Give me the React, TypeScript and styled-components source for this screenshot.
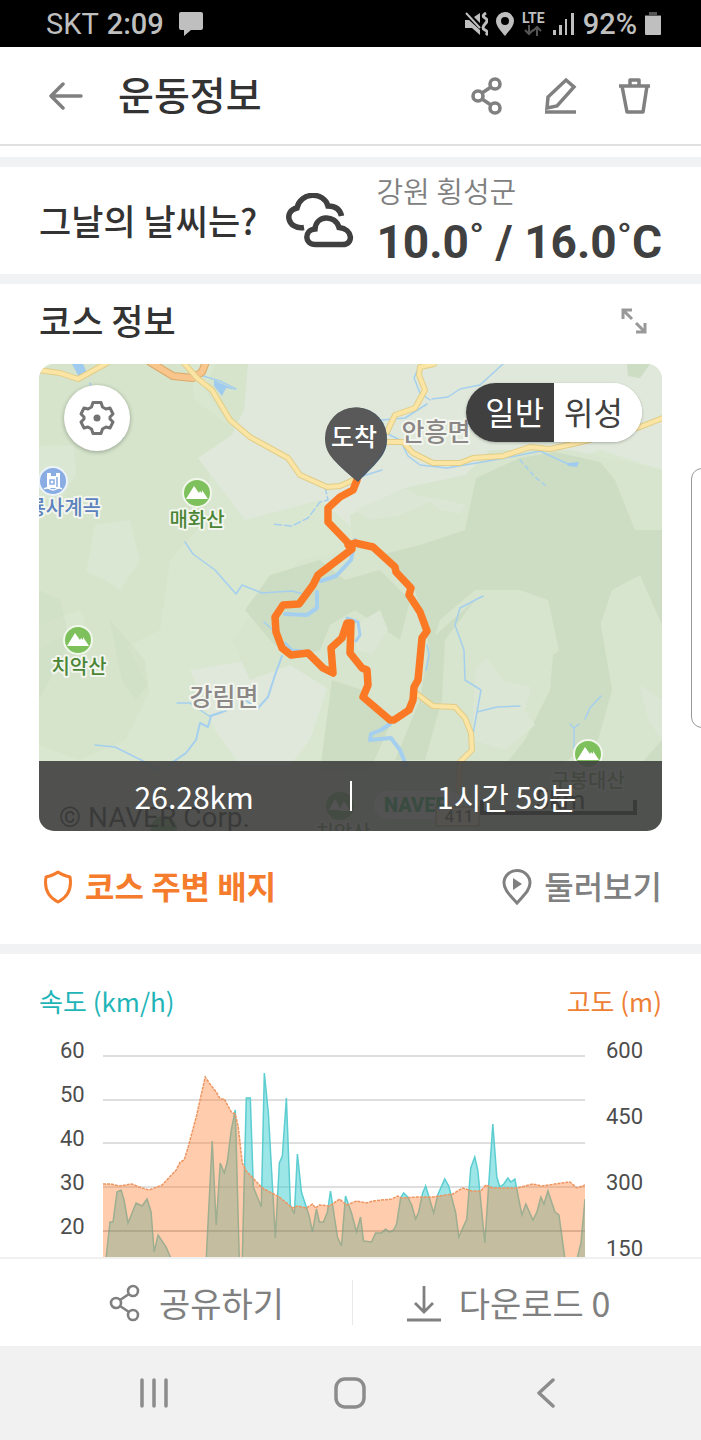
import React from "react";
import styled, { createGlobalStyle } from "styled-components";

const kr = `"Noto Sans CJK KR", sans-serif`;
const latin = `Roboto, "Noto Sans CJK KR", sans-serif`;

const GlobalStyle = createGlobalStyle`
  * { box-sizing: border-box; }
  body { margin: 0; background: #fff; font-family: ${kr}; color: #333; }
  button { border: 0; padding: 0; background: none; font: inherit; color: inherit; cursor: pointer; }
  a { color: inherit; text-decoration: none; }
  h1, h2, p { margin: 0; }
  svg { display: block; flex: none; }
`;

const Screen = styled.div`
  position: relative;
  display: flex;
  flex-direction: column;
  height: 100vh;
  overflow: hidden;
`;

const StatusBar = styled.div`
  display: flex;
  align-items: center;
  justify-content: space-between;
  flex: none;
  height: 47px;
  padding: 0 40px 0 46px;
  background: #000;
  color: #bfbfbf;
  font-family: ${latin};
  font-size: 29px;
  line-height: 32px;
`;

const StatusGroup = styled.div<{ $gap: number }>`
  display: flex;
  align-items: center;
  gap: ${(p) => p.$gap}px;
`;

const StatusText = styled.span<{ $strong?: boolean }>`
  font-weight: ${(p) => (p.$strong ? 500 : 400)};
`;

const Network = styled.span`
  display: flex;
  flex-direction: column;
  align-items: center;
  font-size: 14px;
  font-weight: 700;
  line-height: 12px;
  gap: 1px;
`;

const Header = styled.header`
  display: flex;
  align-items: center;
  flex: none;
  height: 99px;
  padding: 0 48px;
  border-bottom: 2px solid #e0e0e0;
  color: #808080;
`;

const PageTitle = styled.h1`
  margin-left: 34px;
  padding-bottom: 6px;
  color: #333;
  font-size: 39px;
  font-weight: 500;
  line-height: 48px;
`;

const HeaderActions = styled.div`
  display: flex;
  gap: 38px;
  margin-left: auto;
`;

const IconButton = styled.button`
  display: flex;
  align-items: center;
  justify-content: center;
  width: 36px;
  height: 44px;
`;

const Content = styled.main`
  flex: 1;
  min-height: 0;
  padding-top: 11px;
  overflow: hidden;
`;

const Band = styled.div`
  height: 10px;
  background: #f1f2f4;
`;

const Weather = styled.section`
  display: flex;
  align-items: center;
  height: 107px;
  padding: 0 39px;
`;

const SectionTitle = styled.h2`
  padding-bottom: 2px;
  font-size: 35px;
  font-weight: 500;
  line-height: 48px;
`;

const WeatherInfo = styled.div`
  display: flex;
  align-items: center;
  gap: 22px;
  margin-left: auto;
  color: #404040;
`;

const Place = styled.p`
  color: #808080;
  font-size: 29px;
  font-weight: 350;
  line-height: 40px;
`;

const Temperature = styled.p`
  padding-top: 2px;
  font-family: ${latin};
  font-size: 46px;
  font-weight: 700;
  line-height: 60px;
  white-space: nowrap;
`;

const Course = styled.section`
  padding: 0 39px;
`;

const CourseHead = styled.div`
  display: flex;
  align-items: center;
  justify-content: space-between;
  height: 80px;
  padding: 0 8px 6px 0;
`;

const ExpandButton = styled.button`
  width: 40px;
  height: 40px;
  display: flex;
  align-items: center;
  justify-content: center;
  color: #999;
`;

const MapCard = styled.div`
  position: relative;
  border-radius: 15px;
  overflow: hidden;
`;

const MapCanvas = styled.svg`
  width: 100%;
  height: auto;
  font-family: ${kr};
`;

const SettingsButton = styled.button`
  position: absolute;
  top: 21px;
  left: 25px;
  display: flex;
  align-items: center;
  justify-content: center;
  width: 66px;
  height: 66px;
  border-radius: 50%;
  background: #fff;
  box-shadow: 0 1px 4px rgba(0, 0, 0, 0.3);
  color: #737373;
`;

const MapTypes = styled.div`
  position: absolute;
  top: 19px;
  right: 20px;
  display: flex;
  height: 59px;
  border-radius: 30px;
  overflow: hidden;
  background: #fff;
  box-shadow: 0 1px 3px rgba(0, 0, 0, 0.25);
`;

const MapType = styled.button<{ $active?: boolean }>`
  padding: ${(p) => (p.$active ? "0 10px 4px 19px" : "0 19px 4px 10px")};
  background: ${(p) => (p.$active ? "#404040" : "#fff")};
  color: ${(p) => (p.$active ? "#fff" : "#404040")};
  font-size: 32px;
  line-height: 48px;
`;

const MapSummary = styled.div`
  position: absolute;
  right: 0;
  bottom: 0;
  left: 0;
  display: flex;
  align-items: center;
  height: 70px;
  background: rgba(64, 64, 64, 0.9);
  color: #fff;
`;

const SummaryValue = styled.span`
  flex: 1;
  font-size: 30px;
  line-height: 44px;
  text-align: center;
`;

const SummaryDivider = styled.span`
  width: 2px;
  height: 30px;
  background: #fff;
`;

const CourseLinks = styled.div`
  display: flex;
  align-items: center;
  justify-content: space-between;
  height: 113px;
`;

const CourseLink = styled.a<{ $accent?: boolean }>`
  display: flex;
  align-items: center;
  gap: 12px;
  padding-left: 4px;
  color: ${(p) => (p.$accent ? "#f47c2c" : "#808080")};
  font-size: 32px;
  font-weight: ${(p) => (p.$accent ? 700 : 500)};
  line-height: 44px;
`;

const LinkText = styled.span`
  padding-bottom: 6px;
`;

const ChartTitles = styled.div`
  display: flex;
  justify-content: space-between;
  padding: 32px 39px 2px;
`;

const ChartTitle = styled.p<{ $color: string }>`
  color: ${(p) => p.$color};
  font-size: 26px;
  line-height: 30px;
`;

const Chart = styled.div`
  display: grid;
  grid-template-columns: 64px 1fr 77px;
  padding: 0 39px;
  font-family: ${latin};
  font-size: 22px;
  color: #4d4d4d;
`;

const Axis = styled.div<{ $step: number; $top: number }>`
  display: flex;
  flex-direction: column;
  padding: ${(p) => p.$top}px 0 0 21px;
  line-height: ${(p) => p.$step}px;
`;

const Plot = styled.svg`
  width: 100%;
  height: 202px;
  margin-top: 37px;
`;

const ActionBar = styled.div`
  display: flex;
  align-items: center;
  flex: none;
  height: 89px;
  padding: 0 37px 0 41px;
  border-top: 2px solid #f0f0f0;
  background: #fff;
  color: #808080;
`;

const Action = styled.button`
  display: flex;
  flex: 1;
  align-items: center;
  justify-content: center;
  gap: 18px;
  font-size: 34px;
  font-weight: 400;
  line-height: 48px;
`;

const ActionDivider = styled.span`
  width: 1px;
  height: 45px;
  background: #e8e8e8;
`;

const SystemNav = styled.nav`
  display: flex;
  align-items: center;
  justify-content: center;
  gap: 156px;
  flex: none;
  height: 94px;
  padding-right: 2px;
  background: #f1f1f1;
  color: #8c8c8c;
`;

const NavButton = styled.button`
  display: flex;
  align-items: center;
  justify-content: center;
  width: 40px;
  height: 48px;
`;

const EdgeHandle = styled.div`
  position: absolute;
  top: 468px;
  right: -12px;
  width: 22px;
  height: 260px;
  border: 1px solid #999;
  border-radius: 11px;
  background: #fff;
`;

const ShareIcon = ({ width = 3.6 }: { width?: number }) => (
  <svg width="32" height="38" viewBox="0 0 32 38" fill="none" stroke="currentColor" strokeWidth={width}>
    <circle cx="7" cy="19" r="5" />
    <circle cx="24" cy="7" r="5" />
    <circle cx="24" cy="31" r="5" />
    <path d="M11 16 L20 10 M11 22 L20 28" />
  </svg>
);

const elevation: number[][] = [
  [0, 129], [8, 129], [16, 131], [29, 129], [36, 132], [46, 135], [54, 132], [59, 130], [73, 115], [77, 107], [81, 105],
  [85, 92], [93, 62], [102, 22], [106, 28], [113, 37], [117, 44], [121, 44], [128, 57], [132, 59], [135, 72], [139, 108],
  [143, 116], [159, 133], [176, 142], [189, 153], [194, 151], [203, 153], [209, 149], [212, 153], [216, 150], [226, 151],
  [236, 144], [243, 150], [253, 146], [263, 148], [269, 146], [288, 144], [294, 141], [298, 143], [313, 142], [329, 142],
  [349, 139], [359, 133], [368, 136], [377, 136], [382, 130], [389, 133], [413, 133], [429, 129], [438, 131], [458, 128],
  [466, 127], [473, 133], [481, 130],
];

const speed: number[][] = [
  [3, 204], [7, 167], [10, 167], [14, 137], [18, 135], [21, 145], [25, 168], [33, 148], [39, 151], [44, 144], [48, 157],
  [51, 197], [55, 180], [63, 192], [68, 204], [103, 204], [109, 86], [113, 170], [117, 108], [121, 118], [124, 107],
  [128, 75], [132, 55], [136, 204], [139, 204], [143, 43], [147, 43], [150, 132], [158, 152], [161, 18], [165, 58],
  [172, 183], [176, 108], [179, 101], [183, 43], [187, 150], [191, 159], [194, 99], [198, 137], [206, 162], [209, 177],
  [213, 154], [216, 167], [220, 167], [224, 157], [227, 136], [234, 182], [238, 191], [242, 141], [248, 158], [253, 177],
  [257, 162], [260, 186], [268, 187], [272, 178], [278, 178], [282, 174], [286, 177], [290, 175], [293, 169], [297, 143],
  [300, 138], [304, 142], [308, 150], [312, 164], [315, 157], [319, 138], [322, 131], [330, 158], [334, 140], [341, 124],
  [345, 131], [352, 158], [355, 182], [363, 164], [367, 113], [371, 102], [374, 115], [381, 188], [389, 69], [393, 122],
  [396, 132], [400, 129], [404, 123], [407, 127], [411, 124], [418, 160], [422, 149], [429, 165], [433, 157], [437, 142],
  [440, 149], [444, 136], [451, 157], [455, 160], [461, 204], [473, 204], [477, 188], [481, 144],
];

const toLine = (points: number[][]) => points.map((p) => p.join(",")).join(" ");

const route =
  "M357 480 L353 490 L340 497 L328 508 L328 522 L351 546 L352 549 L318 575 L313 585 L299 604 L283 605 L275 617 L276 632 L282 648 L291 655 L308 653 L323 668 L333 673 L331 648 L342 638 L347 623 L351 623 L350 653 L362 668 L367 670 L368 685 L363 697 L390 720 L394 720 L409 710 L413 700 L414 687 L418 680 L422 638 L427 631 L420 612 L409 595 L411 588 L396 572 L395 567 L373 547 L355 543 L348 545";

const roads = [
  "M38 370 L60 373 L78 379 L107 363",
  "M183 362 L197 378 L212 390 L230 420 L250 437 L288 458 L300 475 L327 487 L340 486 L358 478",
  "M387 432 L395 415 L415 408 L425 390 L419 375 L420 367 L434 364",
  "M380 442 L403 442 L413 453 L433 463 L460 463 L473 458 L503 456 L530 447 L550 449 L577 443 L640 427 L663 418",
  "M417 694 L433 706 L455 707 L465 718 L471 733 L472 750 L460 762 L458 800",
];

const Peak = ({ x, y }: { x: number; y: number }) => (
  <g transform={`translate(${x} ${y})`}>
    <circle r="14" fill="#7dc05c" stroke="#f2f7ec" strokeWidth="2" />
    <path d="M-11 6 L-3 -7 L2 0 L3 -2 L5 0 L5 -3 L11 6 Z" fill="#fff" />
  </g>
);

interface LabelProps {
  x: number;
  y: number;
  size: number;
  color: string;
  anchor?: "middle" | "end";
  children: string;
}

const MapLabel = ({ x, y, size, color, anchor = "middle", children }: LabelProps) => (
  <text
    x={x} y={y} fontSize={size} fontWeight="500" fill={color} textAnchor={anchor}
    stroke="#f3f6ee" strokeWidth="4" strokeLinejoin="round" paintOrder="stroke"
  >
    {children}
  </text>
);

const CourseMap = () => (
  <MapCanvas viewBox="39 364 623 467" role="img" aria-label="코스 지도">
    <rect x="39" y="364" width="623" height="467" fill="#dae7d0" />
    <g fill="#d5e4cb">
      <path d="M39 364 H190 L195 400 L235 430 L212 455 L205 520 L170 560 L160 630 L100 660 L80 610 L39 625 Z" />
      <path d="M39 650 L90 620 L130 650 L150 690 L125 740 L80 760 L39 745 Z" />
      <path d="M215 364 H250 L245 410 L232 430 L205 390 Z" />
    </g>
    <path d="M39 446 L74 445 L76 474 L60 500 L39 500 Z M95 525 L130 520 L140 560 L120 590 L105 580 L86 572 Z" fill="#dae7d2" />
    <g fill="#dfe8da">
      <path d="M248 364 H662 V470 L600 450 L540 470 L470 490 L400 500 L355 530 L320 500 L245 520 L198 458 L232 435 L244 410 Z" />
      <path d="M190 670 L280 655 L330 680 L310 740 L290 765 H240 L215 730 Z" />
    </g>
    <g fill="#d7e4ce">
      <path d="M350 515 L405 488 L465 475 L490 450 L570 450 L662 470 V831 H350 L340 700 L360 610 Z" />
      <path d="M232 640 L270 590 L300 560 L350 550 L400 600 L420 690 L360 760 H325 L330 690 L290 665 L250 680 Z" />
    </g>
    <g fill="#cdddc3">
      <path d="M420 545 L465 530 L476 478 L520 458 L555 452 L600 462 L615 480 L635 530 L662 530 V625 L640 575 L612 590 L600 625 L560 655 L548 600 L520 590 L475 590 L440 620 L430 650 L415 590 L380 555 Z" />
      <path d="M245 610 L270 575 L320 560 L345 580 L380 570 L410 600 L400 640 L355 610 L330 625 L320 650 L290 660 L270 640 Z" />
      <path d="M332 680 L362 690 L390 725 L370 770 H320 Z M600 620 L612 690 L598 740 L560 765 H505 L525 740 L550 690 L553 655 Z" />
      <path d="M430 640 L475 600 L445 640 L442 700 L425 760 H395 L420 700 Z" />
      <path d="M39 590 L60 600 L70 640 L39 700 Z M110 620 L145 660 L148 685 L135 700 L122 680 Z" opacity="0.5" />
      <path d="M627 364 H650 L640 378 L628 376 Z M662 740 L640 765 H662 Z" />
    </g>
    <g fill="#dbe6d4">
      <path d="M355 510 L405 489 L420 496 L445 500 L466 505 L460 514 L440 510 L430 502 L400 515 L370 520 Z" />
      <path d="M475 670 L487 658 L505 682 L531 687 L525 710 L535 725 L505 750 L472 740 Z" />
      <path d="M355 625 L380 610 L388 630 L372 655 L356 650 Z M640 685 L662 700 V740 L648 720 Z" />
    </g>

    <g fill="none" stroke="#a5cfee" strokeLinejoin="round" strokeLinecap="round">
      <g strokeWidth="1.5">
        <path d="M90 383 L95 400 L123 438 M203 376 L220 381 L236 389" />
        <path d="M185 542 L193 554 L215 570 L236 594 L242 585 L262 593 L292 591 L307 595" />
        <path d="M325 487 L328 500 L320 502 L308 518 L292 526 L272 524" strokeDasharray="7 3" />
        <path d="M503 364 L480 385 L460 389 L448 397 L432 399 M420 364 L414 378 L420 393 L430 400" />
        <path d="M382 470 L350 480 M370 421 L405 418 L427 404 M388 434 L400 440 L408 456 L420 465 L447 468 L500 459 L540 451 L570 465" />
        <path d="M520 460 L535 477 L545 485" strokeDasharray="4 4" />
        <path d="M483 596 L460 608 L455 625 L464 650 L465 680 L481 690 L477 712 L472 740 M477 712 L497 707 L520 706" />
        <path d="M570 724 L574 728 L579 724 M574 728 V748 M601 696 L590 708 L585 719" />
        <path d="M95 745 L115 747 L145 762 L160 770 M177 703 L190 703 L209 716 L226 711" />
        <path d="M264 622 L275 632 M427 645 L429 655 L426 670" />
      </g>
      <path d="M282 656 L275 675 L268 697 L258 708 L245 700 M222 712 L211 716 L208 727 L200 723 L196 740 L186 753 L170 764" strokeWidth="2" />
      <path d="M355 540 L351 560 L336 576 L321 581 M317 592 L317 608 L307 615 L285 614" strokeWidth="4" />
      <path d="M285 643 L292 650 L310 652 M347 618 L358 622 L360 635 L356 641" strokeWidth="3" />
      <path d="M390 724 L381 730 L371 734 L370 740 L391 738 L400 750 L406 765" strokeWidth="4" />
    </g>
    <g fill="#9fcbee">
      <path d="M72 364 L83 364 L88 375 L80 379 Z" />
      <path d="M214 380 L236 390 L226 388 L222 396 L214 386 Z M567 463 L579 462 L577 467 L568 466 Z" />
    </g>

    <g fill="none" strokeLinejoin="round" strokeLinecap="round">
      <path d="M150 362 L173 376 L193 378 L202 372 L206 362" stroke="#dca968" strokeWidth="8" />
      <path d="M150 362 L173 376 L193 378 L202 372 L206 362" stroke="#f8c58c" strokeWidth="6" />
      {roads.map((d) => <path key={d} d={d} stroke="#e2cd88" strokeWidth="6" />)}
      {roads.map((d) => <path key={d} d={d} stroke="#fbe5a5" strokeWidth="4" />)}
      <path d={route} stroke="#fb7924" strokeWidth="7.5" />
    </g>

    <Peak x={197} y={493} />
    <MapLabel x={197} y={527} size={20} color="#4b8636">매화산</MapLabel>
    <Peak x={78} y={640} />
    <MapLabel x={79} y={674} size={20} color="#4b8636">치악산</MapLabel>
    <Peak x={588} y={754} />
    <MapLabel x={588} y={788} size={20} color="#4b8636">구봉대산</MapLabel>
    <circle cx="53" cy="481" r="14" fill="#89ade2" stroke="#edf3fa" strokeWidth="2" />
    <path d="M47 473 H51 V476 H56 V473 H60 V488 H47 Z" fill="#fff" />
    <path d="M50 480 H54 V484 H50 Z M57 477 V487" fill="none" stroke="#89ade2" strokeWidth="1.5" />
    <path d="M44 489 Q47 487 50 489 T56 489 T62 489" fill="none" stroke="#fff" strokeWidth="1.5" />
    <MapLabel x={101} y={515} size={20} color="#5c82bd" anchor="end">룡사계곡</MapLabel>
    <MapLabel x={436} y={441} size={25} color="#8c8787">안흥면</MapLabel>
    <MapLabel x={224} y={706} size={25} color="#8c8787">강림면</MapLabel>

    <circle cx="340" cy="806" r="14" fill="#6aa84f" />
    <path d="M335 799 L341 810 H329 Z M344 801 L350 811 H339 Z" fill="#fff" />
    <MapLabel x={343} y={840} size={20} color="#4b8636">치악산</MapLabel>
    <circle cx="164" cy="829" r="13" fill="#6aa84f" />
    <rect x="374" y="791" width="88" height="28" rx="14" fill="#fff" />
    <text x="384" y="812" fontSize="20" fontWeight="900" fontFamily={latin} fill="#00b050">NAVER</text>
    <rect x="436" y="807" width="43" height="19" fill="#fff4c9" stroke="#a08040" />
    <text x="459" y="822" fontSize="17" fontWeight="500" textAnchor="middle" fontFamily={latin} fill="#333">411</text>
    <path d="M482 800 V813 H635 V800" fill="none" stroke="#000" strokeWidth="4" />
    <text x="560" y="809" fontSize="26" textAnchor="middle" fontFamily={latin} fill="#000">5km</text>
    <text x="59" y="827" fontSize="28" fontFamily={latin} fill="#000">© NAVER Corp.</text>

    <path d="M326 436 A30.500 30.500 0 0 1 387 440 C387 453 380 460 358 482 C332 460 325 452 326 436 Z" fill="#4b5a68" />
    <path d="M325 438 A30.500 30.500 0 0 1 386 438 C386 452 378 460 357 481 C332 460 325 453 325 438 Z" fill="#595959" />
    <text x="354" y="446" fontSize="25" fontWeight="500" textAnchor="middle" fill="#fff">도착</text>
  </MapCanvas>
);

export default function App() {
  return (
    <>
      <GlobalStyle />
      <Screen>
        <StatusBar>
          <StatusGroup $gap={8}>
            <StatusText>SKT</StatusText>
            <StatusText $strong>2:09</StatusText>
            <svg width="32" height="26" viewBox="0 0 32 26" fill="currentColor">
              <path d="M9 1 H29 Q31 1 31 3 V17 Q31 19 29 19 H19 L12 25 V19 H9 Q7 19 7 17 V3 Q7 1 9 1 Z" />
            </svg>
          </StatusGroup>
          <StatusGroup $gap={8}>
            <svg width="23" height="24" viewBox="0 0 23 24" fill="currentColor">
              <path d="M0 8 H4 L15 18 V23 L7 16 H0 Z M9 5 L15 1 V11 Z" />
              <path d="M1 1 L15 16" fill="none" stroke="currentColor" strokeWidth="2" />
              <path d="M21 1 Q16 4 20 6 T20 12 T20 18 T21 23" fill="none" stroke="currentColor" strokeWidth="3" />
            </svg>
            <svg width="18" height="24" viewBox="0 0 18 24" fill="currentColor" fillRule="evenodd">
              <path d="M9 0 A9 9 0 0 1 18 9 C18 14 13 19 9 24 C5 19 0 14 0 9 A9 9 0 0 1 9 0 Z M9 5 A4 4 0 1 0 9 13 A4 4 0 1 0 9 5 Z" />
            </svg>
            <Network>
              LTE
              <svg width="18" height="11" viewBox="0 0 18 11" fill="none" stroke="#555" strokeWidth="2">
                <path d="M5 0 V9 M1 5 L5 9 L9 5 M13 11 V2 M9 6 L13 2 L17 6" />
              </svg>
            </Network>
            <svg width="22" height="24" viewBox="0 0 22 24" fill="currentColor">
              <path d="M0 18 H3 V23 H0 Z M6 13 H9 V23 H6 Z M12 7 H14 V23 H12 Z M18 1 H21 V23 H18 Z" />
            </svg>
            <StatusText $strong>92%</StatusText>
            <svg width="16" height="24" viewBox="0 0 16 24" fill="currentColor">
              <path d="M4 0 H12 V3 H16 V5 H0 V3 H4 Z" fill="#555" />
              <path d="M0 4 H16 V22 Q16 23 15 23 H1 Q0 23 0 22 Z" />
            </svg>
          </StatusGroup>
        </StatusBar>

        <Header>
          <IconButton aria-label="뒤로">
            <svg width="36" height="28" viewBox="0 0 36 28" fill="none" stroke="currentColor" strokeWidth="3.500" strokeLinecap="round" strokeLinejoin="round">
              <path d="M33 14 H3 M15 2 L3 14 L15 26" />
            </svg>
          </IconButton>
          <PageTitle>운동정보</PageTitle>
          <HeaderActions>
            <IconButton aria-label="공유"><ShareIcon /></IconButton>
            <IconButton aria-label="편집">
              <svg width="32" height="38" viewBox="0 0 32 38" fill="none" stroke="currentColor" strokeWidth="3.500">
                <path d="M21 3 L29 10 L12 29 L2 31 L3 20 Z M0 35 H31" />
              </svg>
            </IconButton>
            <IconButton aria-label="삭제">
              <svg width="34" height="38" viewBox="0 0 34 38" fill="none" stroke="currentColor" strokeWidth="3.500" strokeLinejoin="round">
                <path d="M1 9 H32 M12 9 V3 H21 V9 M4 9 L9 35 H25 L29 9" />
              </svg>
            </IconButton>
          </HeaderActions>
        </Header>

        <Content>
          <Band />
          <Weather>
            <SectionTitle>그날의 날씨는?</SectionTitle>
            <WeatherInfo>
              <svg width="68" height="56" viewBox="0 0 68 56" fill="none" stroke="currentColor" strokeWidth="5.500">
                <path d="M18 34.500 C2 37 -3 18 11 15 C14 -1 38 -2 42 13 C49 13 54 16 55.500 23" />
                <path d="M29.500 51.500 C18 51.500 18 37 29 36 C30 22 49 21 53 34.500 C67 36 68 51.500 56.500 51.500 Z" />
              </svg>
              <div>
                <Place>강원 횡성군</Place>
                <Temperature>10.0˚ / 16.0˚C</Temperature>
              </div>
            </WeatherInfo>
          </Weather>
          <Band />

          <Course>
            <CourseHead>
              <SectionTitle>코스 정보</SectionTitle>
              <ExpandButton aria-label="지도 확대">
                <svg width="28" height="28" viewBox="0 0 28 28" fill="none" stroke="currentColor" strokeWidth="3">
                  <path d="M3 12 V3 H12 M3 3 L12 12 M25 16 V25 H16 M25 25 L16 16" />
                </svg>
              </ExpandButton>
            </CourseHead>
            <MapCard>
              <CourseMap />
              <SettingsButton aria-label="지도 설정">
                <svg width="36" height="36" viewBox="0 0 36 36" fill="none" stroke="currentColor" strokeWidth="3" strokeLinejoin="round">
                  <path d="M14 2.500 H22 L23.500 7 L27 9 L31 8 L34 14 L31 17 V19 L34 22 L31 28 L27 27 L23.500 29 L22 33.500 H14 L12.500 29 L9 27 L5 28 L2 22 L5 19 V17 L2 14 L5 8 L9 9 L12.500 7 Z" />
                  <circle cx="18" cy="18" r="3.500" fill="currentColor" stroke="none" />
                </svg>
              </SettingsButton>
              <MapTypes>
                <MapType $active aria-pressed="true">일반</MapType>
                <MapType aria-pressed="false">위성</MapType>
              </MapTypes>
              <MapSummary>
                <SummaryValue>26.28km</SummaryValue>
                <SummaryDivider />
                <SummaryValue>1시간 59분</SummaryValue>
              </MapSummary>
            </MapCard>
            <CourseLinks>
              <CourseLink href="#badges" $accent>
                <svg width="30" height="36" viewBox="0 0 30 36" fill="none" stroke="currentColor" strokeWidth="3" strokeLinejoin="round">
                  <path d="M15 2 C19 5 23 6 27 7 C29 19 25 27 15 32 C5 27 1 19 3 7 C7 6 11 5 15 2 Z" />
                </svg>
                <LinkText>코스 주변 배지</LinkText>
              </CourseLink>
              <CourseLink href="#explore">
                <svg width="30" height="38" viewBox="0 0 30 38" fill="none" stroke="currentColor" strokeWidth="3">
                  <path d="M15 34 C8 26 2 21 2 14 A13 12.500 0 0 1 28 14 C28 21 22 26 15 34 Z" />
                  <path d="M11 9 L20 15 L11 21 Z" fill="currentColor" stroke="none" />
                </svg>
                <LinkText>둘러보기</LinkText>
              </CourseLink>
            </CourseLinks>
          </Course>
          <Band />

          <section>
            <ChartTitles>
              <ChartTitle $color="#1fb5b8">속도 (km/h)</ChartTitle>
              <ChartTitle $color="#ee8035">고도 (m)</ChartTitle>
            </ChartTitles>
            <Chart>
              <Axis $step={44} $top={11}>
                {[60, 50, 40, 30, 20].map((v) => <span key={v}>{v}</span>)}
              </Axis>
              <Plot viewBox="0 0 481 202" preserveAspectRatio="none" role="img" aria-label="속도와 고도 그래프">
                {[1, 45, 88, 132, 176].map((y) => (
                  <path key={y} d={`M0 ${y} H481`} stroke="#dedede" strokeWidth="2" />
                ))}
                <polygon points={`${toLine(speed)} 481,204`} fill="#3bcdd2" fillOpacity="0.5" />
                <polyline points={toLine(speed)} fill="none" stroke="#5ccdd0" strokeWidth="1.500" />
                <polygon points={`0,204 ${toLine(elevation)} 481,204`} fill="#ff7f32" fillOpacity="0.4" />
                <polyline points={toLine(elevation)} fill="none" stroke="#ee9560" strokeWidth="1.500" strokeDasharray="3 1" />
                <path d="M0 176 H481" stroke="#000" strokeOpacity="0.06" strokeWidth="2" />
              </Plot>
              <Axis $step={66} $top={0}>
                {[600, 450, 300, 150].map((v) => <span key={v}>{v}</span>)}
              </Axis>
            </Chart>
          </section>
        </Content>

        <ActionBar>
          <Action><ShareIcon width={2.6} />공유하기</Action>
          <ActionDivider />
          <Action>
            <svg width="34" height="38" viewBox="0 0 34 38" fill="none" stroke="currentColor" strokeWidth="2.800">
              <path d="M17 2 V28 M8 19 L17 28 L26 19 M0 36 H34" />
            </svg>
            다운로드 0
          </Action>
        </ActionBar>

        <SystemNav>
          <NavButton aria-label="최근 앱">
            <svg width="28" height="30" viewBox="0 0 28 30" stroke="currentColor" strokeWidth="3.500" strokeLinecap="round">
              <path d="M2 2 V28 M14 2 V28 M26 2 V28" />
            </svg>
          </NavButton>
          <NavButton aria-label="홈">
            <svg width="32" height="32" viewBox="0 0 32 32" fill="none" stroke="currentColor" strokeWidth="3.500">
              <rect x="2" y="2" width="28" height="28" rx="9" />
            </svg>
          </NavButton>
          <NavButton aria-label="뒤로 가기">
            <svg width="18" height="30" viewBox="0 0 18 30" fill="none" stroke="currentColor" strokeWidth="3.500" strokeLinecap="round" strokeLinejoin="round">
              <path d="M16 2 L2 15 L16 28" />
            </svg>
          </NavButton>
        </SystemNav>
        <EdgeHandle />
      </Screen>
    </>
  );
}
